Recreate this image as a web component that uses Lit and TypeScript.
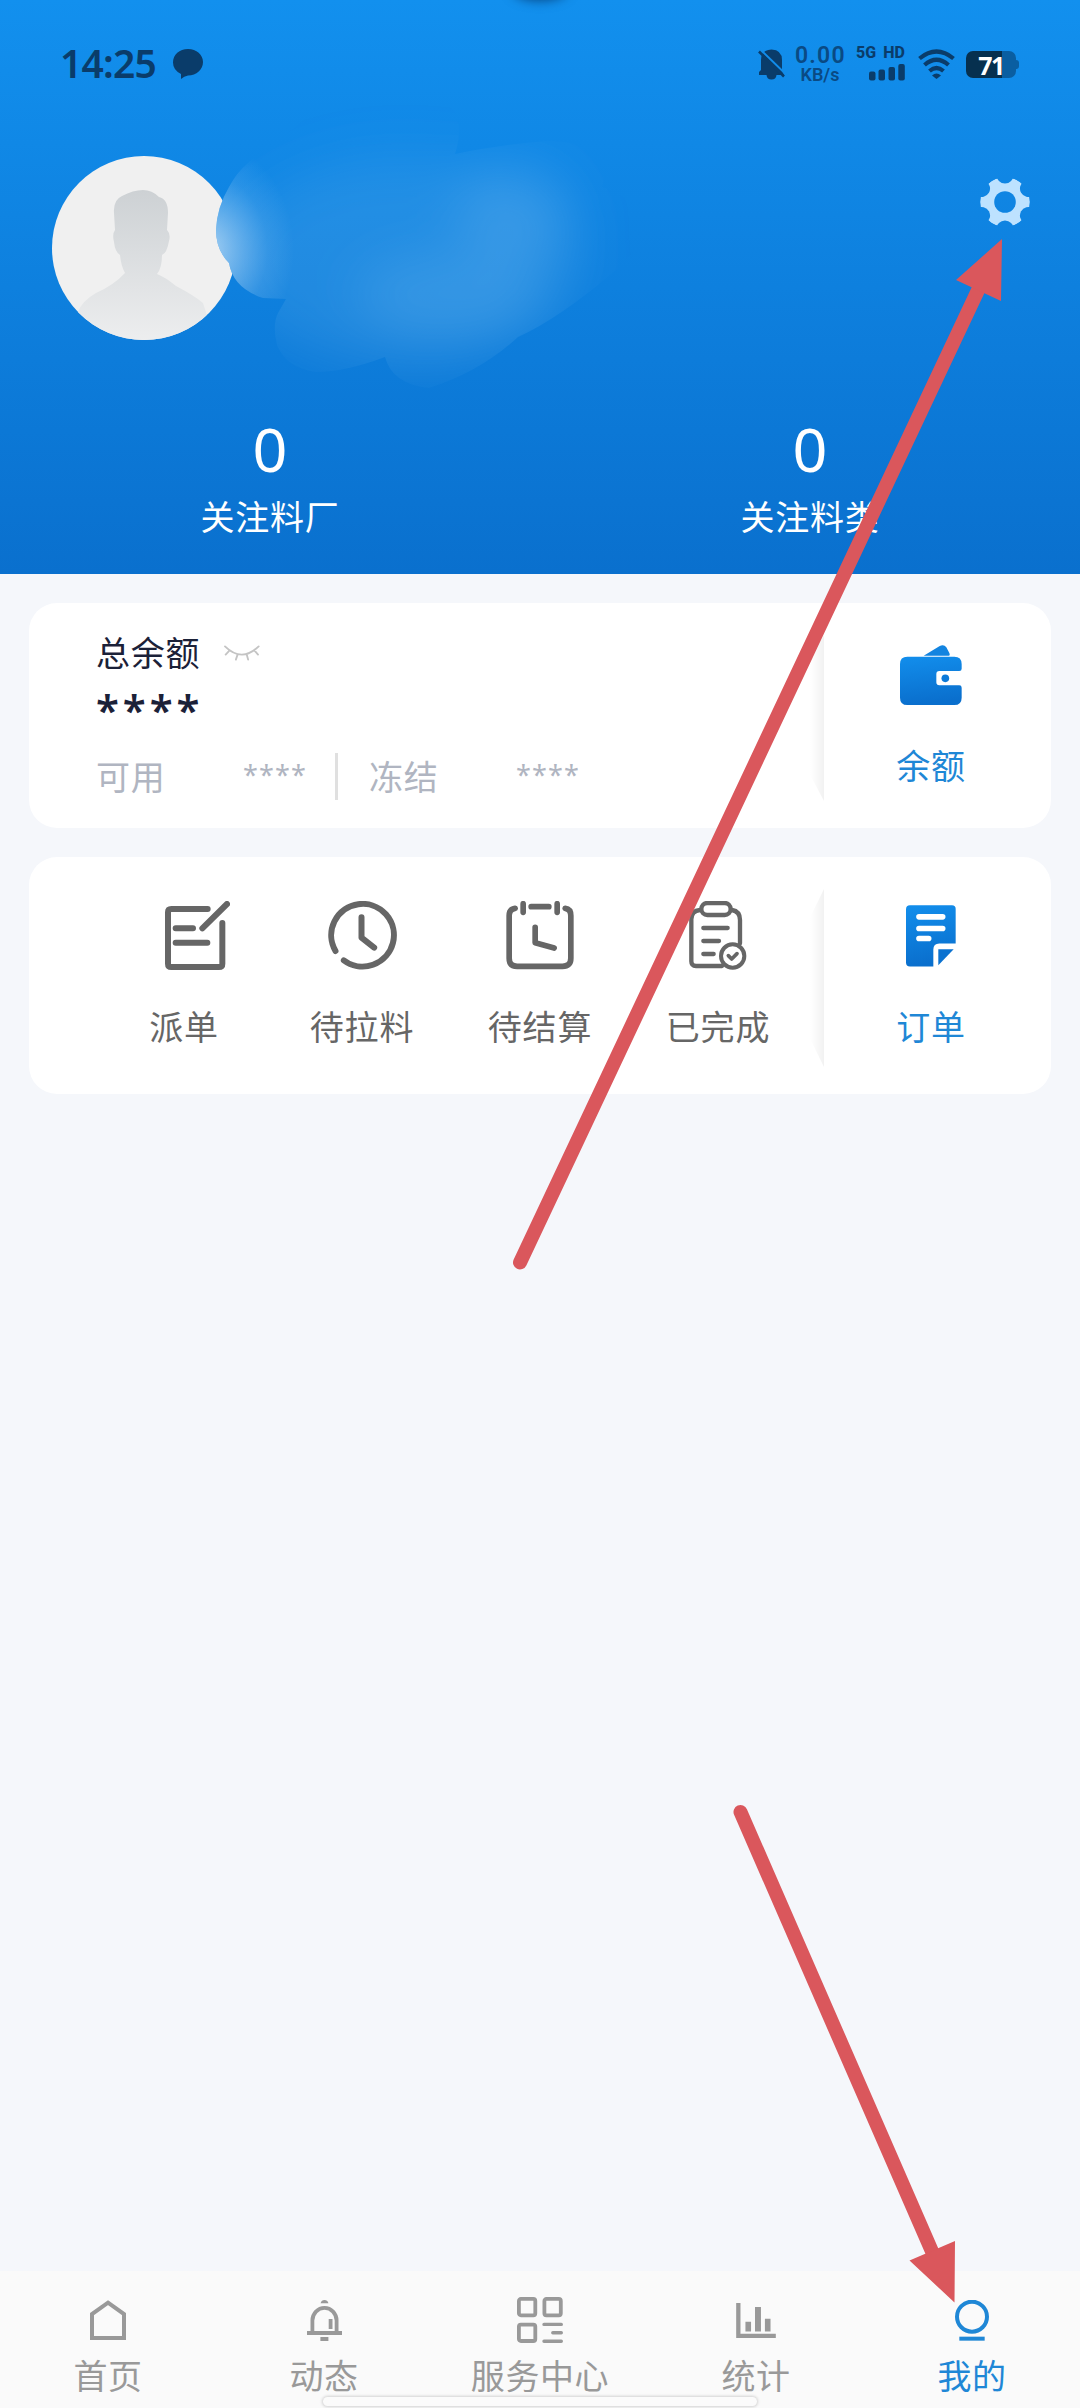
import { LitElement, html, css, svg } from "lit";
import { customElement } from "lit/decorators.js";

const paperIcon = html`<svg viewBox="195 123 195 207" width="65" height="69" class="line">
  <path d="M323 147H214q-10 0-10 10V311q0 10 10 10H357q10 0 10-10V189M227 205H279M227 248H322M307 205L381 132" stroke-width="18" />
</svg>`;
const clockIcon = html`<svg viewBox="681 123 206 207" width="69" height="69" class="line">
  <path d="M703 273A94 94 0 1 1 728 301M781 172V233L819 263" stroke-width="18" />
</svg>`;
const calendarIcon = html`<svg viewBox="1215 123 203 207" width="68" height="69" class="line">
  <path d="M1242 145Q1224 147 1224 167V295q0 24 24 24H1384q25 0 25-24V167Q1409 147 1392 145M1266 131V157M1368 131V157M1290 140H1343M1302 202V248L1359 264" stroke-width="17" />
</svg>`;
const clipboardIcon = html`<svg viewBox="629 123 174 207" width="58" height="69" class="line">
  <path d="M662 150Q636 152 636 178V304q0 14 14 14H728M758 150Q782 154 782 180V250" stroke-width="13" />
  <rect x="666" y="129" width="88" height="36" rx="18" stroke-width="13" />
  <path d="M672 204H745M672 243H719M672 282H703" stroke-width="13" />
  <circle cx="760" cy="288" r="35" stroke-width="12" />
  <path d="M747 287L757 297L773 281" stroke-width="11" />
</svg>`;
const blueDefs = (id: string) => svg`<defs>
  <linearGradient id=${id} x1="0" y1="0" x2="0.15" y2="1">
    <stop offset="0" stop-color="#128eec" /><stop offset="1" stop-color="#0a6fcd" />
  </linearGradient></defs>`;
const walletIcon = html`<svg viewBox="482 166 186 180" width="62" height="60">
  ${blueDefs("wallet")}
  <path fill="#1284e0" d="M553 198L600 170Q613 162 621 173L630 190Q633 198 628 198Z" />
  <path fill="url(#wallet)" d="M504 201H645Q667 201 667 223V237Q667 244 660 244H600Q591 244 591 253V278Q591 287 600 287H660Q667 287 667 294V324Q667 346 645 346H504Q482 346 482 324V223Q482 201 504 201Z" />
  <circle cx="618" cy="266" r="11.5" fill="#0d7ad8" />
</svg>`;
const orderIcon = html`<svg viewBox="500 944 150 185" width="50" height="62">
  ${blueDefs("order")}
  <path fill="url(#order)" d="M512 944H638Q649 944 649 955V1059H600Q582 1059 582 1077V1128H512Q500 1128 500 1116V956Q500 944 512 944Z" />
  <path d="M539 979H610M539 1014H610M539 1044H568" stroke="#fff" stroke-width="17" stroke-linecap="round" />
  <path d="M597 1076H643L597 1124Z" fill="#0b72d0" />
</svg>`;
const eyeIcon = html`<svg viewBox="133 195 109 48" width="36" height="16" class="eye">
  <path d="M136 199Q187 249 238 199M150 211L138 224M174 224L169 239M202 224L206 239M225 211L236 224" />
</svg>`;
const gearIcon = html`<svg viewBox="-25 -25 50 50" width="50" height="50">
  <mask id="gear">
    <circle r="24.8" fill="#fff" /><circle r="10.8" fill="#000" />
    ${[30, 90, 150, 210, 270, 330].map((a) => svg`<circle cx="27.2" r="8.6" fill="#000" transform="rotate(${a})" />`)}
  </mask>
  <circle r="25" fill="#bde2ff" mask="url(#gear)" />
</svg>`;

const homeIcon = html`<svg viewBox="0 0 36 40" width="36" height="40">
  <path d="M18 2.6L34 14V38H2V14Z" fill="none" stroke="currentColor" stroke-width="4" />
</svg>`;
const bellIcon = html`<svg viewBox="0 0 35 41" width="35" height="41" fill="none" stroke="currentColor" stroke-width="3.8">
  <path d="M5.4 32V20.5a12.1 12.6 0 0 1 24.2 0V32" />
  <path d="M0 33H35M13.4 39H21.4M23.6 19V29" />
  <path d="M13.6 3.2Q14.5 0 17.5 0T21.4 3.2Z" fill="currentColor" stroke="none" />
</svg>`;
const gridIcon = html`<svg viewBox="0 0 46 46" width="46" height="46" fill="none" stroke="currentColor" stroke-width="3.8">
  <rect x="1.9" y="1.9" width="16.4" height="16.4" rx="2" />
  <rect x="27.4" y="1.9" width="16.4" height="16.4" rx="2" />
  <rect x="1.9" y="27.6" width="16.4" height="16.4" rx="2" />
  <path d="M27 27.400H44.300M35.800 35.800H44.300M27 44.200H44.300" stroke-width="3.400" stroke-linecap="round" />
</svg>`;
const chartIcon = html`<svg viewBox="408 217 120 106" width="40" height="35" fill="currentColor">
  <path d="M408 217H421V310H528V323H408ZM436 274H453V303H436ZM465 229H483V303H465ZM495 265H512V303H495Z" />
</svg>`;
const mineIcon = html`<svg viewBox="1065 207 102 123" width="34" height="41" fill="none" stroke="currentColor" stroke-width="12">
  <circle cx="1116" cy="257" r="45" /><path d="M1078 323H1154" />
</svg>`;

@customElement("status-bar")
class StatusBar extends LitElement {
  static styles = css`
    :host { display: flex; align-items: center; height: 128px; padding: 0 61px 0 60px; box-sizing: border-box;
      color: #0a3c6a; font-family: "Noto Sans", "Noto Sans CJK SC", sans-serif; }
    svg { display: block; flex: none; }
    .time { font-size: 39px; font-weight: 600; letter-spacing: -0.8px; line-height: 40px; width: 113px; margin-top: -2px; white-space: nowrap; }
    .right { margin-left: auto; display: flex; align-items: center; }
    .speed { width: 50px; margin: 0 10px; text-align: center; color: #0a4a84; white-space: nowrap; font-family: "Roboto", "Noto Sans", sans-serif; font-weight: 600; }
    .rate { font-size: 23px; line-height: 21px; letter-spacing: 1.2px; }
    .unit { font-size: 18px; line-height: 18px; }
    .cell { width: 50px; display: flex; flex-direction: column; align-items: flex-end; gap: 5px; }
    .net { width: 49px; display: flex; justify-content: space-between; font: 800 16px/12px "Roboto", "Noto Sans", sans-serif; }
    .wifi { margin: 0 11px 0 13px; }
    .battery { width: 50px; height: 27px; border-radius: 7px; background: linear-gradient(90deg, #06304f 36px, #0a5ea1 36px);
      color: #fff; font: 700 25px/28px "Noto Sans", sans-serif; text-align: center; letter-spacing: -1.5px; }
    .cap { width: 3px; height: 9px; border-radius: 0 3px 3px 0; background: #0a5ea1; }
  `;
  render() {
    return html`
      <div class="time">14:25</div>
      <svg width="30" height="30" viewBox="0 0 30 30"><path fill="currentColor" d="M15 0C23.500 0 30 5.700 30 13S23.500 26.500 15 26.500Q11 27 8 30V25Q0 21 0 13.500C0 5.700 6.500 0 15 0Z" /></svg>
      <div class="right">
        <svg width="27" height="31" viewBox="0 0 27 31">
          <mask id="mute"><rect width="27" height="31" fill="#fff" /><path d="M2 .3L28 25.300" stroke="#000" stroke-width="2" /></mask>
          <path mask="url(#mute)" fill="currentColor" d="M3 11Q3 1 13.500 .5Q24 1 24 11V22L26 26H18.500Q18 30.500 13.500 30.500T8.500 26H1V23L3 21Z" />
          <path d="M1 2.500L26 27.500" stroke="currentColor" stroke-width="2.600" />
        </svg>
        <div class="speed"><div class="rate">0.00</div><div class="unit">KB/s</div></div>
        <div class="cell">
          <div class="net"><span>5G</span><span>HD</span></div>
          <svg width="36" height="17" viewBox="0 0 36 17" fill="currentColor">
            <rect y="7.500" width="6.500" height="9" rx="2" /><rect x="9.500" y="5.500" width="6.500" height="11" rx="2" />
            <rect x="19.500" y="3" width="6.500" height="13.500" rx="2" /><rect x="29.300" width="6.500" height="16.500" rx="2" />
          </svg>
        </div>
        <svg class="wifi" width="37" height="30" viewBox="0 0 37 30" fill="none" stroke="currentColor" stroke-width="4.200">
          <path d="M1.500 9.500Q18.500-4.500 35.500 9.500M6.500 16Q18.500 5.500 30.500 16M11.500 22Q18.500 16 25.500 22" />
          <path d="M14 26.500Q18.500 22.500 23 26.500L18.500 30Z" fill="currentColor" stroke="none" />
        </svg>
        <div class="battery">71</div><div class="cap"></div>
      </div>`;
  }
}

@customElement("app-root")
class AppRoot extends LitElement {
  static styles = css`
    :host { display: flex; flex-direction: column; position: relative; width: 1080px; height: 2408px; overflow: hidden;
      background: #f5f7fb; font-family: "Noto Sans", "Noto Sans CJK SC", sans-serif; font-size: 34px; line-height: 40px; }
    svg { display: block; }
    .header { position: relative; height: 574px; flex: none; color: #fff; overflow: hidden;
      background: linear-gradient(#1290ee, #0a70ce); }
    .profile { display: flex; justify-content: space-between; align-items: flex-start; padding: 28px 50px 0 52px; height: 283px; box-sizing: border-box; }
    .gear { margin-top: 21px; }
    .smudge { position: absolute; left: 0; top: 0; pointer-events: none; }
    .notch { position: absolute; left: 515px; top: -21px; width: 50px; height: 18px; border-radius: 50%; box-shadow: 0 0 12px 3px #06427d; }
    .stats { display: grid; grid-template-columns: 1fr 1fr; text-align: center; }
    .num { font-size: 61px; line-height: 76px; }
    .stat-label { margin-top: 6px; line-height: 48px; letter-spacing: 0.8px; }
    .cards { display: flex; flex-direction: column; gap: 29px; padding: 29px; flex: 1; }
    .card { display: flex; background: #fff; border-radius: 28px; }
    .balance { height: 225px; }
    .orders { height: 237px; }
    .info { flex: 1; padding: 30px 0 0 67px; }
    .total { display: flex; align-items: center; gap: 24px; color: #1b2138; letter-spacing: 0.8px; }
    .eye { fill: none; stroke: #c4c4c4; stroke-width: 5.5; stroke-linecap: round; }
    .stars { color: #1b2138; font-weight: 600; font-size: 42px; line-height: 50px; height: 50px; padding-top: 12px; letter-spacing: 3.9px; box-sizing: border-box; }
    .split { display: flex; align-items: center; height: 47px; padding-top: 30px; color: #b0b5c1; }
    .split .key { width: 147px; letter-spacing: 0.8px; }
    .split .val { font-size: 27px; letter-spacing: 1.1px; width: 92px; margin-top: -3px; }
    .bar { width: 3px; height: 47px; background: #e0e0e0; margin-right: 31px; }
    .panel { position: relative; width: 227px; padding-right: 13px; box-sizing: border-box; display: flex; flex-direction: column; align-items: center; color: #1f87d6; letter-spacing: 0.8px; }
    .panel::before { content: ""; position: absolute; right: 100%; top: 32px; bottom: 27px; width: 14px;
      background: linear-gradient(90deg, rgba(0,0,0,0), rgba(0,0,0,0.055)); clip-path: polygon(100% 0, 100% 100%, 0 84%, 0 16%); }
    .panel .pic { height: 60px; margin-top: 42px; }
    .orders .pic { margin-top: 48px; }
    .panel .cap { margin-top: 41px; }
    .orders .panel .cap { margin-top: 42px; }
    .steps { flex: 1; display: grid; grid-template-columns: repeat(4, 178px); padding-left: 66px; color: #666; }
    .step { display: flex; flex-direction: column; align-items: center; padding-top: 44px; letter-spacing: 0.8px; }
    .step .cap { margin-top: 37px; }
    .step:first-child svg { margin-left: 27px; }
    .line { fill: none; stroke: #666; stroke-linecap: round; stroke-linejoin: round; }
    .nav { position: relative; height: 137px; flex: none; display: grid; grid-template-columns: repeat(5, 1fr); background: #fafafa; color: #999; }
    .tab { display: flex; flex-direction: column; align-items: center; letter-spacing: 0.6px; }
    .ico { height: 46px; margin-top: 26px; display: flex; align-items: center; }
    .tab .name { margin-top: 13px; }
    .on { color: #1f87d6; }
    .home-bar { position: absolute; left: 323px; top: 126px; width: 434px; height: 9px; border-radius: 5px; background: #fbfbfb; box-shadow: 0 0 3px 1px rgba(0,0,0,0.16); }
    .arrows { position: absolute; left: 0; top: 0; pointer-events: none; }
  `;
  render() {
    const steps = [
      [paperIcon, "派单"], [clockIcon, "待拉料"], [calendarIcon, "待结算"], [clipboardIcon, "已完成"],
    ];
    const tabs = [
      [homeIcon, "首页"], [bellIcon, "动态"], [gridIcon, "服务中心"], [chartIcon, "统计"], [mineIcon, "我的"],
    ];
    return html`
      <div class="header">
        <div class="notch"></div>
        <status-bar></status-bar>
        <div class="profile">
          <svg width="184" height="184" viewBox="52 156 184 184">
            <defs>
              <linearGradient id="person" x1="0" y1="0" x2="0" y2="1">
                <stop offset="0" stop-color="#cdd1d4" /><stop offset="1" stop-color="#edeeef" />
              </linearGradient>
              <clipPath id="face"><circle cx="144" cy="248" r="92" /></clipPath>
            </defs>
            <circle cx="144" cy="248" r="92" fill="#f0f0f0" />
            <path clip-path="url(#face)" fill="url(#person)" d="M143 190Q152 190 159 197Q168 199 168 213L167 230Q171 234 169 241Q167 253 162 255Q162 268 157 274Q165 277 176 286Q195 296 203 303L210 325V342H78V312Q82 301 96 293Q114 285 125 273Q121 266 120 255Q115 252 114 242Q112 234 115 230L114 213Q113 200 122 196Q133 190 143 190Z" />
          </svg>
          <div class="gear">${gearIcon}</div>
        </div>
        <svg class="smudge" width="1080" height="574" viewBox="0 0 1080 574">
          <defs>
            <linearGradient id="sky" gradientUnits="userSpaceOnUse" x1="0" y1="0" x2="0" y2="574">
              <stop offset="0" stop-color="#1290ee" /><stop offset="1" stop-color="#0a70ce" />
            </linearGradient>
            <radialGradient id="glow" gradientUnits="userSpaceOnUse" cx="0" cy="0" r="88" gradientTransform="translate(206 250) scale(1 1.25)">
              <stop offset="0" stop-color="#e8f2fa" stop-opacity="0.72" /><stop offset="0.3" stop-color="#e0eefa" stop-opacity="0.45" />
              <stop offset="0.7" stop-color="#d0e6fa" stop-opacity="0.12" /><stop offset="1" stop-color="#d0e6fa" stop-opacity="0" />
            </radialGradient>
            <clipPath id="blob">
              <path d="M216 230Q217 207 229 187Q237 172 248 163Q265 146 295 127Q335 88 375 82Q425 90 455 110Q463 130 455 154Q497 145 547 141Q580 141 593 154Q608 170 602 187Q635 195 643 225Q641 250 616 270Q560 318 518 337Q480 372 429 388Q392 384 385 357Q345 372 316 372Q286 368 277 345Q272 325 278 313L286 299L263 298Q233 288 229 263Q216 250 216 230Z" />
            </clipPath>
            <filter id="soft" x="-50%" y="-50%" width="200%" height="200%"><feGaussianBlur stdDeviation="26" /></filter>
          </defs>
          <g clip-path="url(#blob)">
            <rect width="1080" height="574" fill="url(#sky)" />
            <g filter="url(#soft)" fill="#7dbdf0">
              <ellipse cx="405" cy="262" rx="175" ry="105" opacity="0.17" />
              <ellipse cx="515" cy="215" rx="58" ry="50" opacity="0.23" />
              <ellipse cx="450" cy="295" rx="95" ry="42" opacity="0.22" />
            </g>
            <rect x="200" y="120" width="110" height="220" fill="url(#glow)" />
          </g>
        </svg>
        <div class="stats">
          <div><div class="num">0</div><div class="stat-label">关注料厂</div></div>
          <div><div class="num">0</div><div class="stat-label">关注料类</div></div>
        </div>
      </div>
      <div class="cards">
        <div class="card balance">
          <div class="info">
            <div class="total"><span>总余额</span>${eyeIcon}</div>
            <div class="stars">****</div>
            <div class="split">
              <span class="key">可用</span><span class="val">****</span>
              <span class="bar"></span>
              <span class="key">冻结</span><span class="val">****</span>
            </div>
          </div>
          <div class="panel"><div class="pic">${walletIcon}</div><div class="cap">余额</div></div>
        </div>
        <div class="card orders">
          <div class="steps">
            ${steps.map(([icon, name]) => html`<div class="step">${icon}<div class="cap">${name}</div></div>`)}
          </div>
          <div class="panel"><div class="pic">${orderIcon}</div><div class="cap">订单</div></div>
        </div>
      </div>
      <div class="nav">
        ${tabs.map(([icon, name], i) => html`<div class="tab ${i === 4 ? "on" : ""}"><div class="ico">${icon}</div><div class="name">${name}</div></div>`)}
        <div class="home-bar"></div>
      </div>
      <svg class="arrows" width="1080" height="2408" viewBox="0 0 1080 2408" fill="#da575c" stroke="#da575c">
        <path d="M520 1262.500L980 286M740.500 1812L934 2256" stroke-width="14" stroke-linecap="round" />
        <path d="M1002 239L956 280L1001 301ZM954.500 2302.500L909.500 2260.500L955 2241Z" stroke="none" />
      </svg>`;
  }
}
